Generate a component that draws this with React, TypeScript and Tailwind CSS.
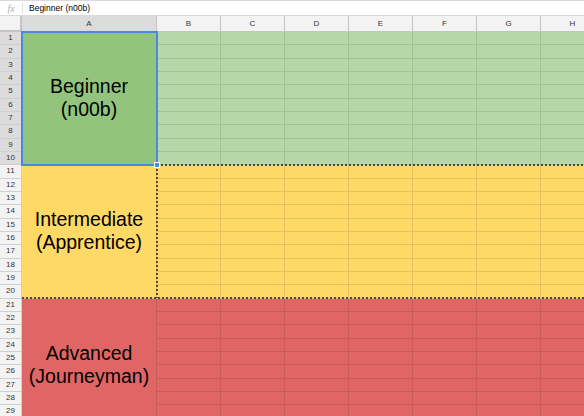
const COLS = ["B", "C", "D", "E", "F", "G", "H"];

const BANDS = [
  { start: 1, lines: ["Beginner", "(n00b)"], main: "bg-[#93c47d]", rest: "bg-[#b6d7a8]" },
  { start: 11, lines: ["Intermediate", "(Apprentice)"], main: "bg-[#ffd966]", rest: "bg-[#ffd966]" },
  { start: 21, lines: ["Advanced", "(Journeyman)"], main: "bg-[#e06666]", rest: "bg-[#e06666]" },
];

function bandFor(row: number) {
  return BANDS[Math.floor((row - 1) / 10)];
}

export default function App() {
  const rows = Array.from({ length: 30 }, (_, i) => i + 1);

  return (
    <div className="h-[416px] w-[584px] overflow-hidden bg-white font-['Liberation_Sans',Arial,sans-serif] text-black">
      {/* Formula bar */}
      <div className="flex h-[16px] items-center border-t border-b border-[#d9d9d9] bg-white">
        <div className="flex w-[22px] items-center justify-center font-['Liberation_Serif',serif] text-[10px] italic text-[#b0b0b0]">
          fx
        </div>
        <div className="h-[11px] w-px bg-[#e0e0e0]" />
        <div className="pl-[6px] text-[8.5px] leading-none">Beginner (n00b)</div>
      </div>

      {/* Sheet */}
      <div className="relative">
        <div className="grid grid-cols-[22px_135px_repeat(7,64px)] grid-rows-[16px_repeat(30,13.333px)]">
          {/* Header row */}
          <div className="border-r-2 border-b-2 border-[#c4c4c4] bg-[#f3f3f3]" />
          <div className="flex items-center justify-center border-r border-b border-[#c4c4c4] bg-[#dcdcdc] text-[8px] text-[#333]">
            A
          </div>
          {COLS.map((c) => (
            <div
              key={c}
              className="flex items-center justify-center border-r border-b border-[#c4c4c4] bg-[#f3f3f3] text-[8px] text-[#333]"
            >
              {c}
            </div>
          ))}

          {rows.map((r) => {
            const band = bandFor(r);
            return [
              <div
                key={`h${r}`}
                className={`flex items-center justify-center border-r border-b border-[#d0d0d0] text-[8px] text-[#333] ${
                  r <= 10 ? "bg-[#dcdcdc]" : "bg-[#f3f3f3]"
                }`}
              >
                {r}
              </div>,
              r === band.start ? (
                <div
                  key={`a${r}`}
                  className={`row-span-10 flex flex-col items-center justify-center border-r border-b border-black/10 text-center text-[19.5px] leading-[23px] ${band.main}`}
                >
                  {band.lines.map((l) => (
                    <div key={l}>{l}</div>
                  ))}
                </div>
              ) : null,
              ...COLS.map((c) => (
                <div key={`${c}${r}`} className={`border-r border-b border-black/10 ${band.rest}`} />
              )),
            ];
          })}
        </div>

        {/* Copy range (dotted) */}
        <div className="absolute left-[157px] right-0 top-[148px] h-[2px] bg-[repeating-linear-gradient(90deg,#4a4a4a_0_2px,transparent_2px_4px)]" />
        <div className="absolute left-[156px] top-[149px] h-[133px] w-[2px] bg-[repeating-linear-gradient(180deg,#4a4a4a_0_2px,transparent_2px_4px)]" />
        <div className="absolute left-[22px] right-0 top-[281px] h-[2px] bg-[repeating-linear-gradient(90deg,#4a4a4a_0_2px,transparent_2px_4px)]" />

        {/* Selection */}
        <div className="absolute left-[21px] top-[15px] h-[135px] w-[137px] border-2 border-[#4a89dc]" />
        <div className="absolute left-[154px] top-[146px] h-[6px] w-[6px] border border-white bg-[#4a89dc]" />
      </div>
    </div>
  );
}
